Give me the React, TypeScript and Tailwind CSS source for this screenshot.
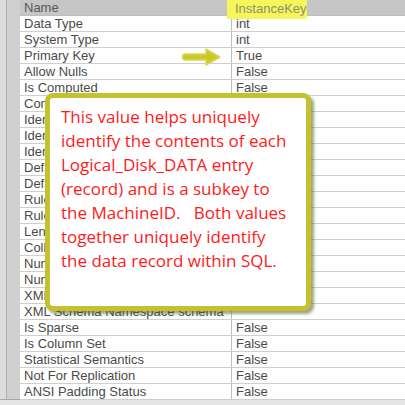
import React from "react";

const rows: [string, string][] = [
  ["Data Type", "int"],
  ["System Type", "int"],
  ["Primary Key", "True"],
  ["Allow Nulls", "False"],
  ["Is Computed", "False"],
  ["Computed Column Specification", ""],
  ["Identity Specification", ""],
  ["Identity Increment", ""],
  ["Identity Seed", ""],
  ["Default Value", ""],
  ["Default Binding", ""],
  ["Rule", ""],
  ["Rule Binding", ""],
  ["Length", ""],
  ["Collation", ""],
  ["Numeric Precision", ""],
  ["Numeric Scale", ""],
  ["XML Schema Namespace", ""],
  ["XML Schema Namespace schema", ""],
  ["Is Sparse", "False"],
  ["Is Column Set", "False"],
  ["Statistical Semantics", "False"],
  ["Not For Replication", "False"],
  ["ANSI Padding Status", "False"],
];

const lines = [
  "This value helps uniquely",
  "identify the contents of each",
  "Logical_Disk_DATA entry",
  "(record) and is a subkey to",
  "the MachineID.\u00a0\u00a0 Both values",
  "together uniquely identify",
  "the data record within SQL.",
];

export default function App() {
  return (
    <div
      className="relative w-[405px] h-[405px] overflow-hidden bg-[#e4e4e4] text-[13px] text-[#4a4a4a]"
      style={{ fontFamily: '"Liberation Sans", Arial, sans-serif' }}
    >
      <div className="flex h-[400px] border-b border-[#a8a8a8]">
        <div className="w-[20px] flex bg-[#d6d6d6]">
          <div className="w-[7px] border-r border-[#b0b0b0] bg-[#dcdcdc]" />
          <div className="flex-1 bg-[#d0d0d0]" />
        </div>
        <div className="flex-1 flex flex-col">
          <div className="grid grid-cols-[211px_1fr] h-[16px] bg-[#c6c6c6] border-b border-[#bdbdbd]">
            <div className="pl-[4px] leading-[16px] text-[#585858]">Name</div>
            <div className="relative border-l border-[#c6c6c6]">
              <div className="absolute -left-[5px] top-0 w-[80px] h-[19px] bg-[#f6f65a] rounded-br-[3px] pl-[8px] leading-[17px] text-[#8f8f70]">
                InstanceKey
              </div>
            </div>
          </div>
          {rows.map(([n, v]) => (
            <div
              key={n}
              className="grid grid-cols-[211px_1fr] h-[16px] bg-white border-b border-[#cfcfcf]"
            >
              <div className="pl-[4px] leading-[15px] whitespace-nowrap overflow-hidden">{n}</div>
              <div className="pl-[4px] leading-[15px] border-l border-[#bdbdbd]">{v}</div>
            </div>
          ))}
        </div>
      </div>

      <svg
        className="absolute left-[180px] top-[47px]"
        width="46"
        height="20"
        viewBox="0 0 46 20"
      >
        <path
          d="M4 7 L26 7 L26 2 L40 10 L26 18 L26 13 L4 13 Q1 10 4 7 Z"
          fill="#c9c92a"
          stroke="#d8d85a"
          strokeWidth="1.5"
          strokeLinejoin="round"
        />
      </svg>

      <div className="absolute left-[45px] top-[93px] w-[266px] h-[218px] rounded-[8px] border-[5px] border-[#c2c22c] bg-white shadow-[3px_3px_3px_rgba(90,90,40,0.55)]">
        <div
          className="pt-[7px] pl-[11px] flex flex-col text-[17px] leading-[24px] text-[#ff1a1a] whitespace-nowrap"
          style={{ fontFamily: '"Open Sans", "Noto Sans", sans-serif' }}
        >
          {lines.map((l) => (
            <span key={l}>{l}</span>
          ))}
        </div>
      </div>
    </div>
  );
}
